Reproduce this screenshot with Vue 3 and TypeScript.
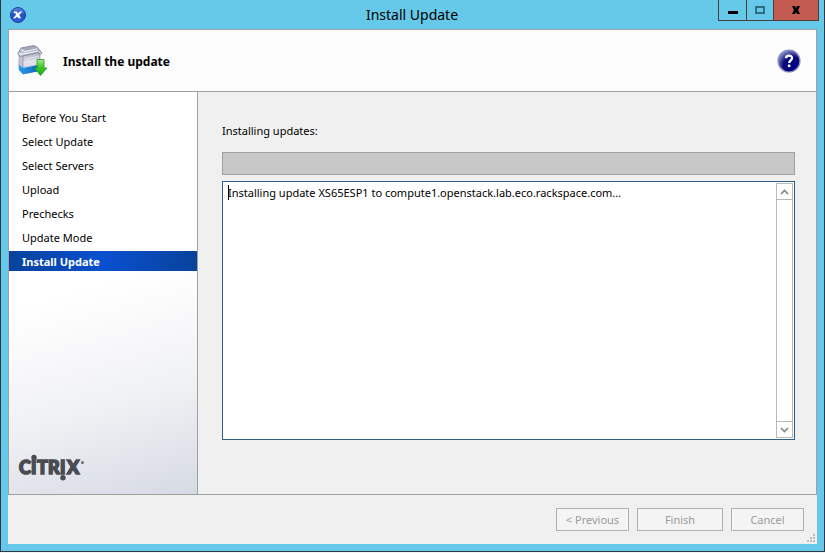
<script setup lang="ts">
import { ref } from 'vue'

const steps: string[] = [
  'Before You Start',
  'Select Update',
  'Select Servers',
  'Upload',
  'Prechecks',
  'Update Mode',
  'Install Update',
]
const current = ref(6)
const log = ref('Installing update XS65ESP1 to compute1.openstack.lab.eco.rackspace.com...')
</script>

<template>
  <div class="desktop">
    <div class="window">
      <header class="titlebar">
        <svg class="app-icon" viewBox="0 0 18 18" aria-hidden="true">
          <defs>
            <linearGradient id="appBlue" x1="0" y1="0" x2="0" y2="1">
              <stop offset="0" stop-color="#5c86e0" />
              <stop offset="0.5" stop-color="#2453c4" />
              <stop offset="1" stop-color="#2c62dc" />
            </linearGradient>
          </defs>
          <circle cx="9" cy="9" r="7.5" fill="url(#appBlue)" stroke="#1c3fa4" />
          <path d="M4.800 5.500H7.800L9 7.500L11 5.500H13.500L10.300 8.800L12 12.200H9.200L8.200 10.500L6.500 12.200H4L7 8.900L6.300 7H4.800Z" fill="#fff" />
        </svg>
        <h1 class="title">Install Update</h1>
        <div class="caption-buttons">
          <button class="cap min" type="button" aria-label="Minimize">
            <svg viewBox="0 0 12 10"><path d="M1 6h10v3H1z" fill="#000" /></svg>
          </button>
          <button class="cap max" type="button" aria-label="Maximize">
            <svg viewBox="0 0 12 10"><path d="M2 2h8v6H2z" fill="none" stroke="#316d80" stroke-width="2" /></svg>
          </button>
          <button class="cap close" type="button" aria-label="Close">
            <svg viewBox="0 0 12 10"><path d="M2 1h3l1 2 1-2h3L8 5l2 4H7L6 7 5 9H2l2-4z" fill="#000" /></svg>
          </button>
        </div>
      </header>

      <div class="client">
        <div class="page">
          <div class="banner">
            <svg class="box-icon" viewBox="0 0 32 34" aria-hidden="true">
              <defs>
                <linearGradient id="boxSide" x1="0" y1="0" x2="0" y2="1">
                  <stop offset="0" stop-color="#a9aec0" />
                  <stop offset="0.5" stop-color="#e2e4ec" />
                  <stop offset="1" stop-color="#b4b8c8" />
                </linearGradient>
                <linearGradient id="boxLid" x1="0" y1="0" x2="0" y2="1">
                  <stop offset="0" stop-color="#8a90a8" />
                  <stop offset="1" stop-color="#dfe1ea" />
                </linearGradient>
                <linearGradient id="boxBlue" x1="0" y1="0" x2="1" y2="0">
                  <stop offset="0" stop-color="#2c9cec" />
                  <stop offset="1" stop-color="#0a62ba" />
                </linearGradient>
                <linearGradient id="arrowGreen" x1="0" y1="0" x2="0" y2="1">
                  <stop offset="0" stop-color="#a4e890" />
                  <stop offset="0.5" stop-color="#38c828" />
                  <stop offset="1" stop-color="#20a818" />
                </linearGradient>
              </defs>
              <path d="M2 9L6 12V30L2 25.500Z" fill="#c3c7d5" stroke="#8b90a6" stroke-width="0.600" />
              <path d="M6 12L23 8V26.500L6 30Z" fill="url(#boxSide)" stroke="#8b90a6" stroke-width="0.600" />
              <path d="M1.800 20.500L6 24L23 20.500V27L6 30.300L2 26Z" fill="url(#boxBlue)" />
              <path d="M4 4L17 1.500L20.500 3.500L25 9L23.500 10.500L21 8.500L7 11.500L3 12.500L0.800 9.500Z" fill="url(#boxLid)" stroke="#777d94" stroke-width="0.800" />
              <path d="M4.500 4.500L16.500 2L20 4L8 6.800Z" fill="#a2a7ba" />
              <path d="M4 5.500L8 7.500L20.500 4.800M2 10L7 9.800L21 7" fill="none" stroke="#f0f1f7" stroke-width="1.100" />
              <path d="M9 15L21 12.500M9 18L21 15.500" stroke="#f4f5f8" stroke-width="0.700" />
              <path d="M20 15.500H27V24H30L23.500 31.500L17.500 24H20Z" fill="url(#arrowGreen)" stroke="#2a9820" stroke-width="0.800" />
            </svg>
            <h2 class="heading">Install the update</h2>
            <button class="help" type="button" aria-label="Help">
              <svg viewBox="0 0 24 24">
                <defs>
                  <radialGradient id="helpBlue" cx="0.65" cy="0.7" r="0.8">
                    <stop offset="0" stop-color="#00008c" />
                    <stop offset="0.5" stop-color="#080878" />
                    <stop offset="1" stop-color="#a8aee0" />
                  </radialGradient>
                </defs>
                <circle cx="12" cy="12" r="11" fill="url(#helpBlue)" stroke="#8e91bc" stroke-width="1.2" />
                <path d="M9 9.200C9 5.800 15 5.800 15 8.900C15 11.400 12.200 11.300 12.200 14" fill="none" stroke="#fff" stroke-width="2.300" />
                <path d="M10.900 15.600h2.500v2.500h-2.500z" fill="#fff" />
              </svg>
            </button>
          </div>

          <div class="body">
            <nav class="sidebar" aria-label="Steps">
              <ol class="steps">
                <li
                  v-for="(step, i) in steps"
                  :key="step"
                  class="step"
                  :class="{ active: i === current }"
                  :aria-current="i === current ? 'step' : undefined"
                >{{ step }}</li>
              </ol>
              <svg class="brand" viewBox="0 0 68 28" role="img" aria-label="Citrix">
                <g class="brand-text" fill="#4b4c52" stroke="#4b4c52" stroke-width="1.600">
                  <text x="1" y="20">C</text>
                  <text x="13" y="20">I</text>
                  <text x="19" y="20">T</text>
                  <text x="30" y="20">R</text>
                  <text x="42" y="20">I</text>
                  <text x="49" y="20">X</text>
                </g>
                <circle cx="16" cy="3.500" r="2.700" fill="#4b4c52" />
                <circle cx="45" cy="23.700" r="2.700" fill="#4b4c52" />
                <circle cx="64.500" cy="8.500" r="1.500" fill="#6b6c72" />
              </svg>
            </nav>

            <main class="content">
              <label class="label" for="log">Installing updates:</label>
              <progress class="progress" max="100" value="0" aria-label="Update progress"></progress>
              <div class="log-box">
                <textarea id="log" v-model="log" class="log" readonly></textarea>
                <span class="caret"></span>
                <div class="scrollbar">
                  <button class="scroll-btn" type="button" aria-label="Scroll up">
                    <svg viewBox="0 0 9 6"><path d="M1 5L4.500 1.500L8 5" fill="none" stroke="#858585" stroke-width="1.700" /></svg>
                  </button>
                  <button class="scroll-btn" type="button" aria-label="Scroll down">
                    <svg viewBox="0 0 9 6"><path d="M1 1L4.500 4.500L8 1" fill="none" stroke="#858585" stroke-width="1.700" /></svg>
                  </button>
                </div>
              </div>
            </main>
          </div>
        </div>

        <footer class="actions">
          <button class="btn" type="button" disabled>&lt; Previous</button>
          <button class="btn wide" type="button" disabled>Finish</button>
          <button class="btn" type="button" disabled>Cancel</button>
          <svg class="grip" viewBox="0 0 8 8" aria-hidden="true">
            <path d="M6 0h2v2h-2z M3 3h2v2h-2z M6 3h2v2h-2z M0 6h2v2h-2z M3 6h2v2h-2z M6 6h2v2h-2z" fill="#bdbdbd" />
          </svg>
        </footer>
      </div>
    </div>
  </div>
</template>

<style>
body {
  background: #f4f4f4;
}
</style>

<style scoped>
* {
  box-sizing: border-box;
}
.desktop {
  display: flex;
  min-height: 100vh;
  padding-bottom: 1px;
  font-family: "Noto Sans", "Open Sans", sans-serif;
  font-size: 11px;
  line-height: 20px;
  color: #000;
}
button,
textarea {
  font: inherit;
  margin: 0;
  padding: 0;
}
svg {
  display: block;
}
.window {
  flex: 1;
  display: flex;
  flex-direction: column;
  background: #66c9ea;
  border: 1px solid #2d3940;
  border-top: 0;
  padding: 0 7px 7px;
}
.titlebar {
  position: relative;
  display: flex;
  align-items: center;
  height: 29px;
}
.app-icon {
  width: 18px;
  height: 18px;
  margin-left: 1px;
}
.title {
  flex: 1;
  margin: 0;
  padding-right: 20px;
  font-size: 14px;
  font-weight: 400;
  text-align: center;
}
.caption-buttons {
  position: absolute;
  top: 0;
  right: -2px;
  display: flex;
  height: 21px;
  border: 1px solid #4c3c3c;
  border-top: 0;
}
.cap {
  display: flex;
  align-items: center;
  justify-content: center;
  width: 27px;
  background: transparent;
  border: 0;
}
.cap svg {
  width: 12px;
  height: 10px;
}
.cap + .cap {
  border-left: 1px solid #4c3c3c;
}
.cap.close {
  width: 45px;
  background: #c35b51;
}
.client {
  flex: 1;
  display: flex;
  flex-direction: column;
  background: #f0f0f0;
}
.page {
  flex: 1;
  display: flex;
  flex-direction: column;
  border: 1px solid #a0a0a0;
}
.banner {
  display: flex;
  align-items: center;
  height: 62px;
  padding: 0 14px 0 8px;
  background: #fcfcfc;
  border-bottom: 1px solid #a0a0a0;
}
.box-icon {
  width: 32px;
  height: 34px;
}
.heading {
  flex: 1;
  margin: 0;
  padding: 2px 0 0 14px;
  font-size: 12px;
  font-weight: 700;
}
.help {
  width: 26px;
  height: 26px;
  padding: 1px;
  background: none;
  border: 0;
}
.body {
  flex: 1;
  display: flex;
}
.sidebar {
  display: flex;
  flex-direction: column;
  justify-content: space-between;
  width: 189px;
  padding: 15px 0 12px;
  background: linear-gradient(165deg, #fff 48%, #f0f1f4 75%, #d6dae4 100%);
  border-right: 1px solid #a0a0a0;
}
.steps {
  display: flex;
  flex-direction: column;
  gap: 4px;
  margin: 0;
  padding: 0;
  list-style: none;
}
.step {
  height: 20px;
  padding-left: 13px;
  line-height: 22px;
}
.step.active {
  font-weight: 700;
  color: #fff;
  background: linear-gradient(90deg, #07429b, #0a50cf 50%, #07429b);
}
.brand {
  width: 68px;
  height: 28px;
  margin-left: 9px;
}
.brand-text {
  font-family: Lato, "Open Sans", sans-serif;
  font-size: 18px;
  font-weight: 900;
}
.content {
  flex: 1;
  display: flex;
  flex-direction: column;
  padding: 29px 21px 54px 24px;
}
.label {
  margin-bottom: 11px;
}
.progress {
  appearance: none;
  display: block;
  width: 100%;
  height: 23px;
  margin-bottom: 6px;
  border: 1px solid #a0a0a0;
  background: #c8c8c8;
}
.progress::-webkit-progress-bar {
  background: #c8c8c8;
}
.log-box {
  position: relative;
  flex: 1;
  display: flex;
  padding: 1px;
  background: #fff;
  border: 1px solid #2b5f88;
}
.log {
  flex: 1;
  padding: 0 4px;
  background: transparent;
  border: 0;
  outline: 0;
  resize: none;
  overflow: hidden;
}
.caret {
  position: absolute;
  top: 3px;
  left: 5px;
  width: 1px;
  height: 15px;
  background: #000;
}
.scrollbar {
  display: flex;
  flex-direction: column;
  justify-content: space-between;
  width: 17px;
  border: 1px solid #b8b8b8;
}
.scroll-btn {
  display: flex;
  align-items: center;
  justify-content: center;
  height: 16px;
  background: #fff;
  border: 0 solid #b8b8b8;
}
.scroll-btn:first-child {
  border-bottom-width: 1px;
}
.scroll-btn:last-child {
  border-top-width: 1px;
}
.scroll-btn svg {
  width: 9px;
  height: 6px;
}
.actions {
  position: relative;
  display: flex;
  justify-content: flex-end;
  gap: 8px;
  padding: 13px 13px 13px 0;
}
.btn {
  width: 73px;
  height: 23px;
  line-height: 21px;
  color: #9b9b9b;
  background: #f4f4f4;
  border: 1px solid #adb2b5;
}
.btn.wide {
  width: 86px;
}
.grip {
  position: absolute;
  right: 2px;
  bottom: 2px;
  width: 8px;
  height: 8px;
}
</style>
